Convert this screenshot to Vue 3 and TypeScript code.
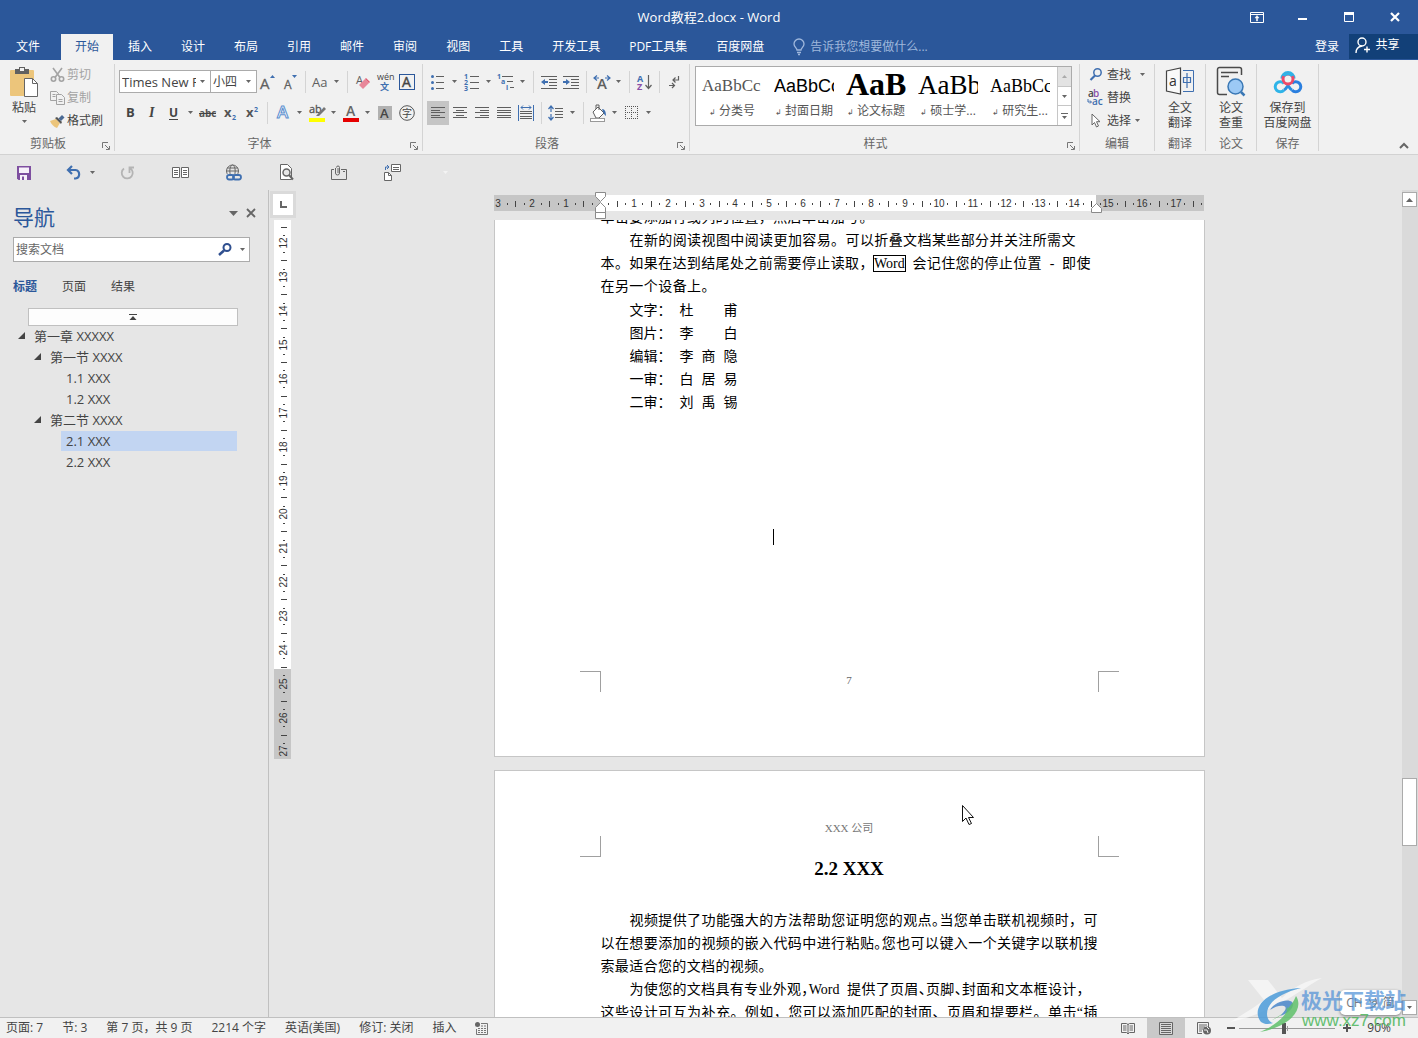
<script setup lang="ts">
import { h } from 'vue'

interface IconDef { w: number; h: number; d: string }
interface Tool { icon?: string; label?: string; caret?: boolean; sep?: number; on?: boolean }

const G = '#5f5f5f'
const B = '#3f6fb0'

function bars(list: number[][], color = G): string {
  return list.map(([x, y, w]) => `<rect x="${x}" y="${y}" width="${w}" height="1" fill="${color}"/>`).join('')
}

const sans = 'font-family="Open Sans, sans-serif"'
const serif = 'font-family="Liberation Serif, serif"'

const icons: Record<string, IconDef> = {
  caret: { w: 5, h: 3, d: `<path d="M0 0h5L2.500 3z" fill="#666"/>` },
  caretBig: { w: 9, h: 5, d: `<path d="M0 0h9L4.500 5z" fill="#666"/>` },
  bulb: { w: 12, h: 16, d: `<path d="M4 11c0-2-3-3-3-6a5 5 0 0 1 10 0c0 3-3 4-3 6zM4 13.500h4M5 15.500h2" fill="none" stroke="#9fb7dc" stroke-width="1.300"/>` },
  user: { w: 16, h: 16, d: `<g fill="none" stroke="#fff" stroke-width="1.400"><circle cx="7" cy="5" r="4"/><path d="M1 16c0-4 2.500-6.500 6-7M12 9.500v6M9 12.500h6"/></g>` },
  winRibbon: { w: 14, h: 11, d: `<path d="M.5.5h13v10H.5zM.5 2.500h13" fill="none" stroke="#fff"/><path d="M6.500 9V6H5l2-2.500L9 6H7.500v3z" fill="#fff" stroke="#fff" stroke-width=".5"/>` },
  winMin: { w: 10, h: 10, d: `<rect y="6" width="9" height="2" fill="#fff"/>` },
  winMax: { w: 10, h: 10, d: `<path d="M.5 1.500h9v8h-9z" fill="none" stroke="#fff"/><rect width="10" height="3" fill="#fff"/>` },
  winClose: { w: 10, h: 10, d: `<path d="M1 1l8 8M9 1L1 9" stroke="#fff" stroke-width="2.200"/>` },
  paste: { w: 30, h: 32, d: `<rect x="1" y="4" width="24" height="26" rx="1" fill="#ecc57b"/><path d="M6 3h4V1h6v2h4v5H6z" fill="#606060"/><rect x="11" y="2" width="4" height="3" fill="#f1f1f1"/><path d="M15.500 12.500h8l5 5v13h-13z" fill="#fff" stroke="#666"/><path d="M23.500 12.500v5h5" fill="none" stroke="#666"/>` },
  cut: { w: 15, h: 15, d: `<g fill="none" stroke="#a3a3a3" stroke-width="1.600"><path d="M3 1l7 9.500M12 1L5 10.500"/><circle cx="3.500" cy="12" r="2.200"/><circle cx="11.500" cy="12" r="2.200"/></g>` },
  copy: { w: 15, h: 14, d: `<g fill="#f1f1f1" stroke="#a3a3a3"><path d="M.5.5h6l2 2v7h-8z"/><path d="M6.500 3.500h5l3 3v7h-8z"/></g><path d="M2.500 3.500h3M2.500 5.500h3M8.500 8.500h4M8.500 10.500h4" stroke="#a3a3a3"/>` },
  brush: { w: 17, h: 14, d: `<path d="M1 7l6-2 4 4-3 5C5 13 2 10 1 7z" fill="#ecc57b"/><path d="M6 4l2-1 5 5-1 2z" fill="#555"/><path d="M9.500 4.500L13 1l2.500 2.500-3.500 3.500z" fill="#4a6a94"/>` },
  launcher: { w: 8, h: 8, d: `<path d="M.5 6V.5H6M3 3l4 4M7.500 4v3.500H4" fill="none" stroke="#777"/>` },
  grow: { w: 18, h: 18, d: `<text x="1" y="16" ${sans} font-size="15" fill="${G}" stroke="${G}" stroke-width=".3">A</text><path d="M11 5h5l-2.500-3z" fill="${B}"/>` },
  shrink: { w: 18, h: 18, d: `<text x="3" y="16" ${sans} font-size="12" fill="${G}" stroke="${G}" stroke-width=".3">A</text><path d="M11 2h5l-2.500 3z" fill="${B}"/>` },
  aa: { w: 18, h: 18, d: `<text x="1" y="14" ${sans} font-size="13" fill="${G}">Aa</text>` },
  eraser: { w: 18, h: 18, d: `<text x="2" y="11" ${sans} font-size="11" fill="${G}">A</text><path d="M5 12l6-6 4 4-6 6z" fill="#e8889a"/><path d="M11 6l1-1 4 4-1 1z" fill="#e05a72"/>` },
  wen: { w: 20, h: 20, d: `<text x="2" y="8" ${sans} font-size="9" fill="#444">wén</text><text x="5" y="18" font-family="Noto Sans CJK SC, sans-serif" font-size="9" font-weight="700" fill="${B}">文</text>` },
  boxA: { w: 16, h: 18, d: `<rect x=".5" y="1.500" width="15" height="15" fill="none" stroke="#2b579a"/><text x="3" y="14" ${sans} font-size="14" fill="#444" stroke="#444" stroke-width=".4">A</text>` },
  bold: { w: 12, h: 16, d: `<text x="2" y="12" ${sans} font-size="13" font-weight="700" fill="#444">B</text>` },
  italic: { w: 12, h: 16, d: `<text x="3" y="12" ${serif} font-size="14" font-style="italic" font-weight="700" fill="#444">I</text>` },
  under: { w: 12, h: 16, d: `<text x="1" y="12" ${sans} font-size="12" font-weight="700" fill="#444">U</text><rect x="1" y="14" width="9" height="1" fill="#444"/>` },
  strike: { w: 18, h: 16, d: `<text x="0" y="12" ${sans} font-size="10" font-weight="700" fill="#555">abc</text><rect x="0" y="8" width="17" height="1" fill="#444"/>` },
  sub: { w: 16, h: 16, d: `<text x="2" y="12" ${sans} font-size="13" font-weight="700" fill="#555">x</text><text x="10" y="15" ${sans} font-size="7" font-weight="700" fill="${B}">2</text>` },
  sup: { w: 16, h: 16, d: `<text x="2" y="12" ${sans} font-size="13" font-weight="700" fill="#555">x</text><text x="10" y="7" ${sans} font-size="7" font-weight="700" fill="${B}">2</text>` },
  effect: { w: 16, h: 18, d: `<text x="2" y="14" ${sans} font-size="17" font-weight="600" fill="#fff" stroke="#5b8fcf" stroke-width="1">A</text>` },
  marker: { w: 20, h: 20, d: `<text x="2" y="10" ${sans} font-size="11" fill="#555" stroke="#555" stroke-width=".3">ab</text><path d="M9 13l8-9 2 2-7 7z" fill="#777"/><rect x="2" y="15" width="16" height="4" fill="#ff0"/>` },
  fontColor: { w: 18, h: 20, d: `<text x="4" y="13" ${sans} font-size="14" font-weight="600" fill="#666">A</text><rect x="1" y="15" width="16" height="4" fill="#e60000"/>` },
  shadeA: { w: 14, h: 16, d: `<rect y="1" width="14" height="14" fill="#b1b1b1"/><text x="2" y="13" ${sans} font-size="13" font-weight="600" fill="#444">A</text>` },
  circleChar: { w: 16, h: 16, d: `<circle cx="8" cy="8" r="7.300" fill="none" stroke="#555"/><text x="3" y="12" font-family="Noto Sans CJK SC, sans-serif" font-size="10" fill="#444">字</text>` },
  bullets: { w: 16, h: 16, d: `<g fill="${B}"><circle cx="2.500" cy="2.500" r="1.500"/><circle cx="2.500" cy="8.500" r="1.500"/><circle cx="2.500" cy="14.500" r="1.500"/></g>${bars([[6, 2, 8], [6, 8, 8], [6, 14, 8]])}` },
  numbers: { w: 16, h: 18, d: `<g ${sans} font-size="7" font-weight="700" fill="${B}"><text y="6">1</text><text y="12">2</text><text y="18">3</text></g>${bars([[6, 3, 9], [6, 9, 9], [6, 15, 9]])}` },
  multi: { w: 18, h: 18, d: `<g ${sans} font-size="7" font-weight="700" fill="${B}"><text y="6">1</text><text x="4" y="11">a</text><text x="9" y="17">i</text></g>${bars([[5, 3, 11], [10, 8, 6], [13, 14, 4]])}` },
  outdent: { w: 16, h: 14, d: `${bars([[0, 1, 16], [8, 4, 8], [8, 7, 8], [8, 10, 8], [0, 13, 16]])}<path d="M0 7l4-3v2h3v2H4v2z" fill="${B}"/>` },
  indent: { w: 16, h: 14, d: `${bars([[0, 1, 16], [8, 4, 8], [8, 7, 8], [8, 10, 8], [0, 13, 16]])}<path d="M7 7L3 4v2H0v2h3v2z" fill="${B}"/>` },
  wideA: { w: 18, h: 16, d: `<text x="4" y="15" ${sans} font-size="15" font-weight="600" fill="${G}">A</text><path d="M1 4h5M4 1.500L1 4l3 2.500M12 4h5M14 1.500L17 4l-3 2.500" fill="none" stroke="${B}" stroke-width="1.200"/>` },
  sort: { w: 16, h: 18, d: `<text x="1" y="9" ${sans} font-size="9" font-weight="700" fill="${B}">A</text><text x="1" y="17" ${sans} font-size="9" font-weight="700" fill="#8a4fa8">Z</text><path d="M12.500 2v13M9.500 12l3 3.500 3-3.500" fill="none" stroke="${G}" stroke-width="1.200"/>` },
  marks: { w: 12, h: 14, d: `<g fill="none" stroke="${G}" stroke-width="1.200"><path d="M10.500 1v4H5M7.500 2.500L5 5l2.500 2.500M1 10.500h5M4 8l2.500 2.500L4 13"/></g>` },
  left: { w: 14, h: 12, d: bars([[0, 0, 14], [0, 3, 9], [0, 5, 14], [0, 8, 9], [0, 10, 14]]) },
  center: { w: 14, h: 12, d: bars([[0, 0, 14], [3, 3, 8], [0, 5, 14], [3, 8, 8], [0, 10, 14]]) },
  right: { w: 14, h: 12, d: bars([[0, 0, 14], [5, 3, 9], [0, 5, 14], [5, 8, 9], [0, 10, 14]]) },
  justify: { w: 14, h: 12, d: bars([[0, 0, 14], [0, 3, 14], [0, 5, 14], [0, 8, 14], [0, 10, 14]]) },
  distribute: { w: 16, h: 16, d: `<path d="M.5 0v16M15.500 0v16M3 2.500h10M5 .5l-2 2 2 2M11 .5l2 2-2 2" fill="none" stroke="${B}"/>${bars([[2, 6, 12], [2, 8, 12], [2, 11, 12], [2, 13, 12]])}` },
  spacing: { w: 16, h: 16, d: `<path d="M3 1v14M.5 4L3 1l2.500 3M.5 12L3 15l2.500-3" fill="none" stroke="${B}" stroke-width="1.200"/><path d="M1 8h4" stroke="#f1f1f1" stroke-width="2"/>${bars([[7, 3, 8], [7, 6, 8], [7, 9, 8], [7, 12, 8]])}` },
  fill: { w: 18, h: 18, d: `<path d="M4 8l5-5 6 6-5 5H7z" fill="#fff" stroke="${G}"/><path d="M7 5V1h3v5" fill="none" stroke="${G}"/><path d="M13 5c3 0 4 3 4 7-2-1-2-3-3-4z" fill="${B}"/><rect x="1.500" y="14.500" width="14" height="3" fill="#fff" stroke="#999"/>` },
  borders: { w: 14, h: 14, d: `<path d="M0 .5h13M0 6.500h13M0 12.500h13M.5 0v13M6.500 0v13M12.500 0v13" fill="none" stroke="#555" stroke-dasharray="1 1"/>` },
  find: { w: 14, h: 13, d: `<circle cx="8.500" cy="4.500" r="3.700" fill="none" stroke="${B}" stroke-width="1.500"/><path d="M6 7.500L1.500 12" stroke="${B}" stroke-width="2.200"/>` },
  findBold: { w: 14, h: 13, d: `<circle cx="9" cy="4.500" r="3.500" fill="none" stroke="#2f4f8f" stroke-width="2"/><path d="M6 7.500L1 12" stroke="#2f4f8f" stroke-width="2.500"/>` },
  replace: { w: 17, h: 18, d: `<g ${sans} font-size="10" font-weight="600"><text x="1" y="8" fill="#444">a</text><text x="6" y="8" fill="#8a4fa8">b</text><text x="5" y="16" fill="${B}">ac</text></g><path d="M1 10v3h3M3 11.500L4.500 13 3 14.500" fill="none" stroke="${B}"/>` },
  select: { w: 10, h: 15, d: `<path d="M1 1v11l2.500-2.500 2 4.500 2-1-2-4.300H9z" fill="#fff" stroke="#666"/>` },
  translate: { w: 30, h: 30, d: `<path d="M1.500 5L15.500 2v26l-14-3z" fill="#fafafa" stroke="#444" stroke-width="1.200"/><text x="4" y="20" ${sans} font-size="14" fill="#333">a</text><path d="M18 4.500h10.500v21H18" fill="none" stroke="${B}"/><path d="M18.500 11.500h7v5h-7zM22 7v15" fill="none" stroke="${B}" stroke-width="1.200"/>` },
  paper: { w: 30, h: 30, d: `<path d="M11 28.500H3.500a2 2 0 0 1-2-2v-23a2 2 0 0 1 2-2h20a2 2 0 0 1 2 2V9" fill="none" stroke="#4a4a4a" stroke-width="1.500"/><path d="M5 6.500h17M5 10.500h8" stroke="#4a4a4a" stroke-width="1.500"/><circle cx="19.500" cy="20.500" r="7.500" fill="#9cc9f5" stroke="#3a78b5" stroke-width="1.500"/><path d="M25 26l3.500 3.500" stroke="#3a78b5" stroke-width="2.500"/>` },
  netdisk: { w: 28, h: 24, d: `<g fill="none" stroke-width="3"><path d="M10 14.500a5 5 0 1 0 0 6.500" stroke="#2eb4e8"/><path d="M18 14.500a5 5 0 1 1 0 6.500" stroke="#2a7fdf"/><path d="M10 21c2-1 3-3 4-4.500 1 1.500 2 3.500 4 4.500" stroke="#2a8ddf"/><path d="M8 9.500a6 6 0 0 1 12 0" stroke="#2eb4e8"/><circle cx="14" cy="10" r="5" stroke="#ee4a68"/><path d="M9.500 7a5.500 5.500 0 0 1 9 0" stroke="#2eb4e8"/></g>` },
  collapse: { w: 10, h: 7, d: `<path d="M1 6l4-4 4 4" fill="none" stroke="#666" stroke-width="2"/>` },
  save: { w: 14, h: 14, d: `<path d="M0 0h14v14H1.500L0 12.500z" fill="#7e4fa0"/><rect x="2" y="1.500" width="10" height="5.500" fill="#f7f1fa"/><rect x="3" y="9" width="7" height="5" fill="#f7f1fa"/><rect x="5" y="10.500" width="2" height="3.500" fill="#7e4fa0"/>` },
  undo: { w: 16, h: 15, d: `<path d="M2 5h7.500a4.300 4.300 0 0 1 0 8.500H8M6 1L2 5l4 4" fill="none" stroke="${B}" stroke-width="2.200"/>` },
  redo: { w: 15, h: 14, d: `<path d="M10 2.200A5.500 5.500 0 1 1 4 2.500M9.500 7V1.500H14" fill="none" stroke="#b4b4b4" stroke-width="1.800"/>` },
  pages: { w: 17, h: 12, d: `<path d="M.5.5h7v10h-7zM9.500.5h7v10h-7z" fill="#fff" stroke="#666"/><path d="M2 3.500h4M2 5.500h4M2 7.500h4M11 3.500h4M11 5.500h4M11 7.500h4" stroke="#666"/>` },
  globe: { w: 17, h: 17, d: `<g fill="none" stroke="#666"><circle cx="7.500" cy="7" r="6"/><ellipse cx="7.500" cy="7" rx="2.700" ry="6"/><path d="M2 4h11M1.500 7h12"/></g><rect x="1" y="10" width="16" height="7" fill="#e6e6e6"/><g fill="none" stroke="${B}" stroke-width="1.800"><rect x="2" y="11" width="7" height="4.500" rx="2.200"/><rect x="8" y="11" width="8" height="4.500" rx="2.200"/></g>` },
  preview: { w: 15, h: 17, d: `<path d="M1.500.5h7l4 4v11h-11z" fill="#fff" stroke="#666"/><circle cx="7.500" cy="8.500" r="3.500" fill="#e6e6e6" stroke="#666" stroke-width="1.500"/><path d="M10 11l4 4.500" stroke="#666" stroke-width="2"/>` },
  clip: { w: 17, h: 16, d: `<path d="M3 4.500H.5v10h15v-10H10M12 6.500h2" fill="none" stroke="#666"/><path d="M4.500 3v5a2 2 0 0 0 4 0V2.500a1.500 1.500 0 0 0-3 0" fill="none" stroke="#666"/><path d="M7 3v5" stroke="#666"/>` },
  swap: { w: 17, h: 17, d: `<path d="M7.500.5h9v7h-9zM9 3.500h6M9 5.500h6M.5 8.500h4l3 3v5h-7z" fill="#fff" stroke="#666"/><path d="M4.500 8.500v3h3" fill="none" stroke="#666"/><path d="M1.500 6V3h3M3 1l2 2-2 2" fill="none" stroke="${B}"/>` },
  dash: { w: 5, h: 5, d: `<path d="M0 1h5L2.500 4z" fill="#f4f4f4"/>` },
  close: { w: 10, h: 10, d: `<path d="M1 1l8 8M9 1L1 9" stroke="#666" stroke-width="1.800"/>` },
  toTop: { w: 8, h: 6, d: `<path d="M0 0h8v1H0zM4 2l3.500 4h-7z" fill="#444"/>` },
  node: { w: 7, h: 7, d: `<path d="M7 0v7H0z" fill="#444"/>` },
  up: { w: 7, h: 4, d: `<path d="M3.500 0L7 4H0z" fill="#666"/>` },
  upPale: { w: 5, h: 3, d: `<path d="M2.500 0L5 3H0z" fill="#aaa"/>` },
  more: { w: 7, h: 6, d: `<path d="M0 0h7v1H0zM1 3h5L3.500 6z" fill="#666"/>` },
  tabL: { w: 8, h: 8, d: `<path d="M1 0h2v5h5v2H1z" fill="#666"/>` },
  macro: { w: 13, h: 13, d: `<circle cx="2.500" cy="2.500" r="2.500" fill="#666"/><path d="M6 1.500h6.500v11h-11V7" fill="none" stroke="#777"/><path d="M6 4h6M3 6.500h8M3 8.500h8M3 10.500h8" stroke="#777" stroke-dasharray="2 1"/>` },
  read: { w: 14, h: 13, d: `<path d="M.5 1.500h5l1.500 1 1.500-1h5v9h-5L7 12l-1.500-1.500h-5zM7 2v10" fill="none" stroke="#666"/><path d="M2 4h3.500M2 6h3.500M2 8h3.500M8.500 4H12M8.500 6H12M8.500 8H12" stroke="#666"/>` },
  print: { w: 14, h: 13, d: `<path d="M.5.5h13v12H.5z" fill="#d9d9d9" stroke="#666"/><path d="M2 2.500h10M2 4.500h10M2 6.500h10M2 8.500h10M2 10.500h10" stroke="#666"/>` },
  web: { w: 15, h: 13, d: `<path d="M5 11.500H.5V.5h11V5M2 3h8M2 5h6M2 7h4M2 9h3" fill="none" stroke="#666"/><circle cx="10" cy="8.500" r="4" fill="#666"/><path d="M7 8h3l1 3M10 5l2 2" stroke="#eee" fill="none"/>` },
  imeMark: { w: 12, h: 12, d: `<path d="M2 2c1 1 2 2 1 4M8 1c2 2 3 8-5 10M5 6c2-3 5-2 5 1" fill="none" stroke="#888" stroke-width="1.200"/>` },
}

const Icon = (p: { name: string }) => {
  const i = icons[p.name]
  return h('svg', { class: 'icon', width: i.w, height: i.h, viewBox: `0 0 ${i.w} ${i.h}`, 'aria-hidden': 'true', innerHTML: i.d })
}
Icon.props = ['name']

const tabs = ['开始', '插入', '设计', '布局', '引用', '邮件', '审阅', '视图', '工具', '开发工具', 'PDF工具集', '百度网盘']

const fontTop: Tool[] = [
  { icon: 'grow', label: '增大字号' }, { icon: 'shrink', label: '减小字号' }, { sep: 8 },
  { icon: 'aa', label: '更改大小写', caret: true }, { sep: 9 },
  { icon: 'eraser', label: '清除所有格式' }, { icon: 'wen', label: '拼音指南' }, { icon: 'boxA', label: '字符边框' },
]
const fontBottom: Tool[] = [
  { icon: 'bold', label: '加粗' }, { icon: 'italic', label: '倾斜' }, { icon: 'under', label: '下划线', caret: true },
  { icon: 'strike', label: '删除线' }, { icon: 'sub', label: '下标' }, { icon: 'sup', label: '上标' }, { sep: 9 },
  { icon: 'effect', label: '文本效果', caret: true }, { icon: 'marker', label: '突出显示', caret: true },
  { icon: 'fontColor', label: '字体颜色', caret: true }, { icon: 'shadeA', label: '字符底纹' }, { icon: 'circleChar', label: '带圈字符' },
]
const paraTop: Tool[] = [
  { icon: 'bullets', label: '项目符号', caret: true }, { icon: 'numbers', label: '编号', caret: true },
  { icon: 'multi', label: '多级列表', caret: true }, { sep: 9 },
  { icon: 'outdent', label: '减少缩进量' }, { icon: 'indent', label: '增加缩进量' }, { sep: 9 },
  { icon: 'wideA', label: '中文版式', caret: true }, { sep: 8 }, { icon: 'sort', label: '排序' }, { sep: 8 },
  { icon: 'marks', label: '显示编辑标记' },
]
const paraBottom: Tool[] = [
  { icon: 'left', label: '左对齐', on: true }, { icon: 'center', label: '居中' }, { icon: 'right', label: '右对齐' },
  { icon: 'justify', label: '两端对齐' }, { icon: 'distribute', label: '分散对齐' }, { sep: 8 },
  { icon: 'spacing', label: '行距', caret: true }, { sep: 8 },
  { icon: 'fill', label: '底纹', caret: true }, { icon: 'borders', label: '边框', caret: true },
]

const styles = [
  { cls: 'pv-light', name: '分类号' }, { cls: 'pv-hei', name: '封面日期' }, { cls: 'pv-title', name: '论文标题' },
  { cls: 'pv-big', name: '硕士学...' }, { cls: 'pv-body', name: '研究生...' },
]

const quick = [
  { icon: 'redo', label: '重复' }, { icon: 'pages', label: '多页' }, { icon: 'globe', label: '超链接' },
  { icon: 'preview', label: '打印预览' }, { icon: 'clip', label: '附件' }, { icon: 'swap', label: '切换' },
  { icon: 'dash', label: '自定义快速访问工具栏' },
]

const tree = [
  { level: 1, text: '第一章 XXXXX', open: true }, { level: 2, text: '第一节 XXXX', open: true },
  { level: 3, text: '1.1 XXX' }, { level: 3, text: '1.2 XXX' }, { level: 2, text: '第二节 XXXX', open: true },
  { level: 3, text: '2.1 XXX', active: true }, { level: 3, text: '2.2 XXX' },
]

const credits = [['文字：', '杜甫'], ['图片：', '李白'], ['编辑：', '李商隐'], ['一审：', '白居易'], ['二审：', '刘禹锡']]
const stats = ['页面: 7', '节: 3', '第 7 页，共 9 页', '2214 个字', '英语(美国)', '修订: 关闭', '插入']

const CM = 33.87
function marks(from: number, to: number, origin: number, limit: number) {
  const out: { at: number; kind: 'num' | 'dot' | 'tick'; n: number }[] = []
  for (let q = from * 4; q <= to * 4; q++) {
    const at = Math.round(origin + (q * CM) / 4)
    if (at < 3 || at > limit - 2 || q === 0) continue
    out.push({ at, kind: q % 4 === 0 ? 'num' : q % 2 === 0 ? 'tick' : 'dot', n: Math.abs(q / 4) })
  }
  return out
}
const hMarks = marks(-3, 18, 106, 712)
const vMarks = marks(11, 27, -383, 539)
</script>

<template>
  <div class="app">
    <header class="title-bar">
      <span></span>
      <h1>Word教程2.docx - Word</h1>
      <div class="win">
        <button aria-label="功能区显示选项"><Icon name="winRibbon" /></button>
        <button aria-label="最小化"><Icon name="winMin" /></button>
        <button aria-label="最大化"><Icon name="winMax" /></button>
        <button aria-label="关闭"><Icon name="winClose" /></button>
      </div>
    </header>

    <nav class="tabs">
      <button class="tab file">文件</button>
      <button v-for="(t, i) in tabs" :key="t" class="tab" :class="{ active: i === 0 }">{{ t }}</button>
      <button class="tell"><Icon name="bulb" />告诉我您想要做什么...</button>
      <button class="login">登录</button>
      <button class="share"><Icon name="user" />共享</button>
    </nav>

    <section class="ribbon">
      <div class="group g-clip">
        <div class="body clip">
          <button class="big paste"><Icon name="paste" /><span>粘贴</span><Icon name="caret" /></button>
          <div class="stack">
            <button class="small off"><span class="ic"><Icon name="cut" /></span>剪切</button>
            <button class="small off"><span class="ic"><Icon name="copy" /></span>复制</button>
            <button class="small"><span class="ic"><Icon name="brush" /></span>格式刷</button>
          </div>
        </div>
        <footer><span>剪贴板</span><button aria-label="剪贴板选项"><Icon name="launcher" /></button></footer>
      </div>

      <div class="group g-font">
        <div class="body rows">
          <div class="row">
            <label class="combo name"><select aria-label="字体"><option>Times New Roman</option></select><Icon name="caret" /></label>
            <label class="combo size"><select aria-label="字号"><option>小四</option></select><Icon name="caret" /></label>
            <template v-for="(t, i) in fontTop" :key="i">
              <span v-if="t.sep" class="sep" :style="{ width: t.sep + 'px' }"></span>
              <button v-else class="tool" :class="{ drop: t.caret }" :aria-label="t.label"><span><Icon :name="t.icon!" /></span><Icon v-if="t.caret" name="caret" /></button>
            </template>
          </div>
          <div class="row">
            <template v-for="(t, i) in fontBottom" :key="i">
              <span v-if="t.sep" class="sep" :style="{ width: t.sep + 'px' }"></span>
              <button v-else class="tool" :class="{ drop: t.caret }" :aria-label="t.label"><span><Icon :name="t.icon!" /></span><Icon v-if="t.caret" name="caret" /></button>
            </template>
          </div>
        </div>
        <footer><span>字体</span><button aria-label="字体选项"><Icon name="launcher" /></button></footer>
      </div>

      <div class="group g-para">
        <div class="body rows">
          <div v-for="(r, k) in [paraTop, paraBottom]" :key="k" class="row">
            <template v-for="(t, i) in r" :key="i">
              <span v-if="t.sep" class="sep" :style="{ width: t.sep + 'px' }"></span>
              <button v-else class="tool" :class="{ drop: t.caret, on: t.on }" :aria-label="t.label"><span><Icon :name="t.icon!" /></span><Icon v-if="t.caret" name="caret" /></button>
            </template>
          </div>
        </div>
        <footer><span>段落</span><button aria-label="段落选项"><Icon name="launcher" /></button></footer>
      </div>

      <div class="group g-styles">
        <div class="body">
          <div class="gallery">
            <button v-for="s in styles" :key="s.name" class="style">
              <span class="pv" :class="s.cls">AaBbCc</span>
              <span class="nm"><small>↲</small> {{ s.name }}</span>
            </button>
            <div class="gal-nav">
              <button class="dim" aria-label="上一行"><Icon name="upPale" /></button>
              <button aria-label="下一行"><Icon name="caret" /></button>
              <button aria-label="其他"><Icon name="more" /></button>
            </div>
          </div>
        </div>
        <footer><span>样式</span><button aria-label="样式选项"><Icon name="launcher" /></button></footer>
      </div>

      <div class="group g-edit">
        <div class="body">
          <div class="stack">
            <button class="small"><span class="ic"><Icon name="find" /></span>查找<Icon class="far" name="caret" /></button>
            <button class="small"><span class="ic"><Icon name="replace" /></span>替换</button>
            <button class="small"><span class="ic"><Icon name="select" /></span>选择<Icon class="near" name="caret" /></button>
          </div>
        </div>
        <footer><span>编辑</span></footer>
      </div>
      <div class="group g-one">
        <div class="body"><button class="big"><Icon name="translate" /><span>全文<br />翻译</span></button></div>
        <footer><span>翻译</span></footer>
      </div>
      <div class="group g-one">
        <div class="body"><button class="big"><Icon name="paper" /><span>论文<br />查重</span></button></div>
        <footer><span>论文</span></footer>
      </div>
      <div class="group g-save">
        <div class="body"><button class="big"><Icon name="netdisk" /><span>保存到<br />百度网盘</span></button></div>
        <footer><span>保存</span></footer>
      </div>
      <button class="collapse" aria-label="折叠功能区"><Icon name="collapse" /></button>
    </section>

    <div class="quick">
      <button class="q-save" aria-label="保存"><Icon name="save" /></button>
      <button class="q-undo" aria-label="撤消"><Icon name="undo" /><Icon name="caret" /></button>
      <button v-for="q in quick" :key="q.icon" :aria-label="q.label"><Icon :name="q.icon" /></button>
    </div>

    <main class="work">
      <aside class="nav">
        <div class="nav-head">
          <h2>导航</h2>
          <button aria-label="任务窗格选项"><Icon name="caretBig" /></button>
          <button aria-label="关闭"><Icon name="close" /></button>
        </div>
        <div class="search">
          <input type="text" placeholder="搜索文档" aria-label="搜索文档" />
          <button aria-label="搜索"><Icon name="findBold" /></button>
          <button class="s-more" aria-label="搜索选项"><Icon name="caret" /></button>
        </div>
        <div class="nav-tabs">
          <button class="active">标题</button><button>页面</button><button>结果</button>
        </div>
        <button class="to-top" aria-label="跳转到开头"><Icon name="toTop" /></button>
        <ul class="tree">
          <li v-for="n in tree" :key="n.text" :class="['lv' + n.level, { active: n.active }]">
            <span class="arrow"><Icon v-if="n.open" name="node" /></span><a href="#">{{ n.text }}</a>
          </li>
        </ul>
      </aside>

      <div class="v-col">
        <button class="tab-stop" aria-label="制表符"><Icon name="tabL" /></button>
        <svg class="v-ruler" width="17" height="539" viewBox="0 0 17 539">
          <rect width="17" height="449" fill="#fff" /><rect y="449" width="17" height="90" fill="#c6c6c6" />
          <template v-for="m in vMarks" :key="m.at">
            <text v-if="m.kind === 'num'" :transform="`translate(13 ${m.at}) rotate(-90)`" text-anchor="middle">{{ m.n }}</text>
            <rect v-else-if="m.kind === 'tick'" class="mk" x="7" :y="m.at" width="6" height="1" />
            <rect v-else class="mk" x="9" :y="m.at" width="2" height="1" />
          </template>
        </svg>
      </div>

      <div class="canvas">
        <svg class="h-ruler" width="711" height="26" viewBox="0 0 711 26">
          <rect y="5" width="710" height="16" fill="#c6c6c6" /><rect x="106" y="5" width="496" height="16" fill="#fff" />
          <template v-for="m in hMarks" :key="m.at">
            <text v-if="m.kind === 'num'" :x="m.at" y="17" text-anchor="middle">{{ m.n }}</text>
            <rect v-else-if="m.kind === 'tick'" class="mk" :x="m.at" y="11" width="1" height="6" />
            <rect v-else class="mk" :x="m.at" y="13" width="1" height="2" />
          </template>
          <g class="handle">
            <path d="M101.500 2.500h10v4l-5 5-5-5zM106.500 12.500l5 5v5h-10v-5zM101.500 22.500h10v6h-10z" />
            <path d="M602.500 13.500l5 5v4h-10v-4z" />
          </g>
        </svg>

        <div class="viewport">
          <article class="page first">
            <div class="text">
              <p><span class="line l19">单击要添加行或列的位置，然后单击加号。</span></p>
              <p>
                <span class="line in l33">在新的阅读视图中阅读更加容易。可以折叠文档某些部分并关注所需文</span>
                <span class="line l34">本。如果在达到结尾处之前需要停止读取，<b class="boxed">Word</b>&nbsp; 会记住您的停止位置&nbsp; -&nbsp; 即使</span>
                <span class="line l8">在另一个设备上。</span>
              </p>
              <dl>
                <div v-for="c in credits" :key="c[0]"><dt>{{ c[0] }}</dt><dd>{{ c[1] }}</dd></div>
              </dl>
            </div>
            <div class="edge foot"><i></i><span>7</span><i></i></div>
            <span class="beam"></span>
          </article>

          <article class="page second">
            <p class="running">XXX 公司</p>
            <div class="edge head"><i></i><i></i></div>
            <h3>2.2 XXX</h3>
            <div class="text">
              <p>
                <span class="line in">视频提供了功能强大的方法帮助您证明您的观点<i class="half">。</i>当您单击联机视频时，可</span>
                <span class="line">以在想要添加的视频的嵌入代码中进行粘贴<i class="half">。</i>您也可以键入一个关键字以联机搜</span>
                <span class="line l12">索最适合您的文档的视频。</span>
              </p>
              <p>
                <span class="line in l34">为使您的文档具有专业外观<i class="half">，</i>Word&nbsp; 提供了页眉<i class="half">、</i>页脚<i class="half">、</i>封面和文本框设计，</span>
                <span class="line">这些设计可互为补充。例如，您可以添加匹配的封面、页眉和提要栏。单击“插</span>
              </p>
            </div>
            <svg class="pointer" width="12" height="20" viewBox="0 0 12 20"><path d="M.5.5v16l3.500-3.500 3 6.500 2.500-1-3-6h5z" fill="#fff" stroke="#111" /></svg>
          </article>
        </div>
      </div>

      <div class="scroll">
        <button aria-label="向上滚动"><Icon name="up" /></button>
        <div class="track"><div class="thumb"></div></div>
        <button aria-label="向下滚动"><Icon name="caret" /></button>
      </div>
    </main>

    <footer class="status">
      <span v-for="s in stats" :key="s">{{ s }}</span>
      <Icon name="macro" />
      <div class="views">
        <button aria-label="阅读视图"><Icon name="read" /></button>
        <button class="on" aria-label="页面视图"><Icon name="print" /></button>
        <button aria-label="Web 版式视图"><Icon name="web" /></button>
      </div>
      <div class="zoom-box">
        <button class="minus" aria-label="缩小"></button>
        <input class="zoom" type="range" min="10" max="184" value="90" aria-label="显示比例" />
        <button class="plus" aria-label="放大"></button>
      </div>
      <span class="pct">90%</span>
    </footer>

    <div class="brand">
      <svg width="190" height="60" viewBox="0 0 190 60">
        <path d="M20 4h20l14 18c10-10 24-18 40-20C72 14 44 38 2 46c14-8 26-16 34-22z" fill="#fff" opacity=".55" />
        <path d="M33 46c-10-12 2-32 40-34-20 5-34 14-34 26 0 4 2 8 6 9-5 2-9 1-12-1z" fill="#4a9ad8" opacity=".85" />
        <path d="M42 34c4-8 18-12 22-8 4 4-4 12-12 14 4-4 8-8 4-10-3-1-9 0-14 4z" fill="#3f7fc8" opacity=".8" />
        <path d="M68 20c8 12-4 30-36 36 18-8 28-18 28-26-3 7-10 12-16 14 12-6 20-14 24-24z" fill="#5fbf6a" opacity=".85" />
      </svg>
      <div class="ime">CH <Icon name="imeMark" /> 简</div>
      <strong>极光下载站</strong>
      <em>www.xz7.com</em>
    </div>
  </div>
</template>

<style>
body { margin: 0; overflow: hidden; }
</style>

<style scoped>
.app { position: relative; display: flex; flex-direction: column; height: 100vh; overflow: hidden; background: #e6e6e6; color: #444; font: 12px/16px "Open Sans", "Noto Sans CJK SC", sans-serif; }
.app * { box-sizing: border-box; }
button { border: 0; background: none; padding: 0; margin: 0; font: inherit; color: inherit; display: flex; align-items: center; justify-content: center; white-space: nowrap; }
h1, h2, h3, p, ul, dl, dd { margin: 0; padding: 0; font-weight: 400; }
.icon { flex: none; display: block; overflow: visible; }

.title-bar { display: grid; grid-template-columns: 1fr auto 1fr; align-items: center; height: 34px; flex: none; background: #2b579a; color: #fff; }
.title-bar h1 { font-size: 13px; line-height: 34px; }
.win { display: flex; justify-content: flex-end; }
.win button { width: 46px; height: 34px; }

.tabs { display: flex; align-items: stretch; gap: 1px; height: 26px; flex: none; background: #2b579a; color: #fff; }
.tab { padding: 0 14px; line-height: 22px; }
.tab.file { padding: 0 16px; margin-right: 4px; }
.tab.active { background: #f1f1f1; color: #2b579a; }
.tell { margin-left: 14px; gap: 5px; color: #9fb7dc; }
.login { margin-left: auto; padding: 0 9px; }
.share { width: 69px; height: 25px; gap: 4px; padding: 0 12px 3px 0; background: #124078; }

.ribbon { display: flex; flex: none; height: 95px; background: #f1f1f1; border-bottom: 1px solid #d2d2d2; }
.group { display: flex; flex-direction: column; flex: none; border-right: 1px solid #d4d4d4; margin: 4px 0; height: 87px; }
.body { height: 70px; }
.group footer { display: flex; height: 17px; color: #666; }
.group footer span { flex: 1; text-align: center; line-height: 20px; }
.group footer button { width: 16px; margin-left: -16px; align-items: flex-end; padding-bottom: 1px; }
.g-clip { width: 115px; }
.g-font { width: 308px; }
.g-para { width: 267px; }
.g-styles { width: 390px; }
.g-clip footer span, .g-font footer span, .g-para footer span, .g-styles footer span { padding-right: 18px; }
.g-edit { width: 75px; }
.g-one { width: 51px; }
.g-save { width: 62px; }
.clip { display: flex; }
.big { width: 100%; height: 68px; flex-direction: column; justify-content: flex-start; color: #444; }
.big .icon { margin: 2px 0; }
.big span { line-height: 15px; text-align: center; margin-top: 2px; }
.g-save .big .icon { margin: 5px 0; }
.paste { width: 48px; }
.paste span { margin-top: 0; }
.paste .icon:last-child { margin: 5px 0 0; }
.stack { display: flex; flex-direction: column; align-items: flex-start; margin-top: -1px; }
.small { height: 23px; justify-content: flex-start; }
.small .ic { width: 19px; display: flex; justify-content: center; }
.small.off { color: #a3a3a3; }
.g-edit .stack { padding-left: 6px; }
.g-edit .ic { width: 21px; padding-right: 2px; }
.far { margin-left: 9px; }
.near { margin-left: 4px; }
.rows { padding: 2px 0 0 4px; }
.row { display: flex; align-items: center; height: 31px; }
.tool { width: 22px; height: 24px; }
.tool span { width: 22px; display: flex; justify-content: center; flex: none; }
.tool.drop { width: 34px; justify-content: flex-start; }
.tool.drop > .icon { margin-left: 3px; }
.tool.on { background: #c5c5c5; }
.sep { height: 22px; flex: none; background: linear-gradient(#d4d4d4, #d4d4d4) center / 1px 100% no-repeat; }
.combo { display: grid; align-items: center; height: 23px; background: #fff; border: 1px solid #ababab; }
.combo select { grid-area: 1 / 1; appearance: none; border: 0; background: none; margin: 0; padding: 0 14px 0 2px; width: 100%; font: 13px/20px "Open Sans", "Noto Sans CJK SC", sans-serif; color: #444; overflow: hidden; text-overflow: clip; outline: 0; }
.combo .icon { grid-area: 1 / 1; justify-self: end; margin-right: 5px; }
.combo.name { width: 92px; }
.combo.size { width: 47px; margin-left: -1px; }
.combo.size select { font-size: 12px; }
.gallery { display: flex; height: 60px; margin: 2px 7px 0 5px; background: #fff; border: 1px solid #ababab; }
.style { width: 72px; flex-direction: column; justify-content: flex-start; align-items: center; color: #555; }
.pv { width: 60px; height: 36px; line-height: 38px; overflow: hidden; text-align: left; color: #000; font-family: "Liberation Serif", serif; font-size: 18px; }
.pv-light { font-size: 17px; color: #555; }
.pv-hei { font-family: "Liberation Sans", sans-serif; }
.pv-title { font-size: 32px; font-weight: 700; line-height: 34px; }
.pv-big { font-size: 27px; line-height: 36px; }
.nm { line-height: 16px; }
.nm small { font-size: 8px; }
.gal-nav { display: flex; flex-direction: column; width: 14px; margin-left: auto; border-left: 1px solid #c6c6c6; }
.gal-nav button { flex: 1; border-bottom: 1px solid #c6c6c6; }
.gal-nav button:last-child { border-bottom: 0; }
.gal-nav .dim { background: #e3e3e3; }
.collapse { margin: auto 9px 5px auto; }

.quick { display: flex; flex: none; height: 35px; }
.quick button { width: 53px; }
.quick .q-save { width: 48px; }
.quick .q-undo { padding-left: 12px; gap: 8px; }

.work { display: flex; flex: 1; min-height: 0; border-bottom: 1px solid #c0c0c0; }
.nav { width: 269px; flex: none; border-right: 1px solid #c0c0c0; padding: 14px 18px 0 13px; }
.nav-head { display: flex; height: 32px; gap: 8px; margin-right: -6px; }
.nav-head h2 { flex: 1; font-size: 21px; line-height: 26px; color: #2b579a; }
.nav-head button { height: 18px; }
.search { display: flex; width: 237px; height: 25px; margin-top: 1px; background: #fff; border: 1px solid #ababab; }
.search input { flex: 1; min-width: 0; border: 0; outline: 0; background: none; padding: 0 2px; font: inherit; color: #555; }
.search input::placeholder { color: #666; opacity: 1; }
.search .s-more { width: 14px; margin: 0 0 0 3px; }
.nav-tabs { display: flex; gap: 25px; margin-top: 17px; }
.nav-tabs .active { font-weight: 700; color: #2b579a; }
.to-top { width: 210px; height: 18px; margin: 13px 0 0 15px; background: #fdfdfd; border: 1px solid #c0c0c0; }
.tree { list-style: none; margin-top: -1px; font-size: 13px; }
.tree li { display: flex; align-items: center; height: 21px; }
.tree a { color: inherit; text-decoration: none; flex: 1; line-height: 20px; }
.arrow { width: 16px; display: flex; }
.lv1 { padding-left: 5px; }
.lv2 { padding-left: 21px; }
.lv3 { padding-left: 48px; }
.lv3 .arrow { display: none; }
.lv3 a { padding-left: 5px; }
.tree .active a { background: #c2d5f2; margin-right: 13px; }

.v-col { width: 27px; flex: none; display: flex; flex-direction: column; align-items: flex-start; }
.tab-stop { width: 26px; height: 27px; margin: 1px 0 2px 1px; background: #fff; border: 3px solid #dadada; }
.v-ruler { margin-left: 5px; flex: none; }
.v-ruler text, .h-ruler text { font: 10px "Liberation Sans", sans-serif; fill: #333; }
.mk { fill: #444; }
.canvas { flex: 1; min-width: 0; display: flex; flex-direction: column; align-items: center; }
.h-ruler { flex: none; position: relative; z-index: 1; overflow: visible; }
.handle path { fill: #fff; stroke: #8a8a8a; }
.viewport { flex: 1; min-height: 0; overflow: hidden; margin-top: 4px; }
.page { position: relative; width: 711px; background: #fff; border: 1px solid #c6c6c6; color: #000; font: 14px/23px "Liberation Serif", "Noto Sans CJK SC", serif; }
.page.first { border-top: 0; overflow: hidden; padding-bottom: 64px; }
.first .text { margin-top: -14px; height: 465px; }
.text { padding: 0 106px; }
.page.second { margin-top: 13px; padding-top: 49px; }
.line { display: block; width: 497px; white-space: nowrap; text-align: justify; text-align-last: justify; }
.line.in { padding-left: 29px; }
.l8 { width: 115px; }
.l12 { width: 172px; }
.line.l19 { width: 273px; }
.line.l33 { width: 475px; }
.line.l34 { width: 490px; }
.line.l8 { width: 115px; }
.line.l12 { width: 172px; }
.half { font-style: normal; font-feature-settings: "halt"; }
.boxed { font-weight: 400; outline: 1px solid #000; }
dl { padding: 1px 0 0 29px; }
dl div { display: flex; }
dt { width: 50px; }
dd { width: 58px; text-align: justify; text-align-last: justify; }
.edge { display: flex; justify-content: space-between; height: 21px; margin: 0 85px; font-size: 11px; line-height: 18px; color: #666; }
.edge i { width: 21px; border: 0 solid #a0a0a0; }
.foot i { border-top-width: 1px; }
.head i { border-bottom-width: 1px; }
.edge i:first-child { border-right-width: 1px; }
.edge i:last-child { border-left-width: 1px; }
.running { text-align: center; font-size: 11px; line-height: 16px; color: #777; }
.page h3 { text-align: center; font-size: 19px; font-weight: 700; line-height: 24px; margin-bottom: 28px; }
.beam { position: absolute; left: 278px; top: 309px; width: 1px; height: 16px; background: #000; }
.pointer { position: absolute; left: 467px; top: 34px; }

.scroll { width: 16px; flex: none; display: flex; flex-direction: column; padding: 2px 1px 2px 0; background: #dadada; }
.scroll button { height: 15px; background: #fff; border: 1px solid #ababab; }
.track { flex: 1; display: grid; grid-template-rows: 571fr 68px 154fr; }
.thumb { grid-row: 2; background: #fff; border: 1px solid #ababab; }

.status { display: flex; align-items: center; flex: none; height: 20px; gap: 19px; padding: 0 27px 0 6px; background: #f1f1f1; white-space: nowrap; }
.views { display: flex; margin-left: auto; align-self: stretch; }
.views button { width: 38px; }
.views .on { background: #c9c9c9; }
.zoom-box { display: flex; align-items: center; gap: 4px; margin: 0 -3px 0 -15px; }
.zoom-box button { width: 8px; height: 8px; background: linear-gradient(#555, #555) center / 8px 2px no-repeat; }
.zoom-box .plus { margin-left: 4px; background: linear-gradient(#555, #555) center / 8px 2px no-repeat, linear-gradient(#555, #555) center / 2px 8px no-repeat; }
.zoom { appearance: none; width: 96px; height: 12px; margin: 0; background: linear-gradient(#999, #999) center / 100% 1px no-repeat, linear-gradient(#999, #999) center / 1px 5px no-repeat; }
.zoom::-webkit-slider-thumb { appearance: none; width: 4px; height: 11px; background: #555; }

.brand { position: absolute; right: 0; bottom: 2px; width: 190px; height: 60px; pointer-events: none; }
.brand > * { position: absolute; }
.ime { display: flex; align-items: center; justify-content: center; gap: 4px; left: 112px; top: 14px; width: 61px; height: 25px; border-radius: 5px; background: #fff; box-shadow: 0 1px 3px #777; color: #777; }
.brand strong { left: 73px; top: 9px; font-size: 21px; line-height: 30px; font-weight: 700; color: #4d8fd6; opacity: 0.7; white-space: nowrap; }
.brand em { left: 74px; top: 35px; font: 17px/20px "Liberation Sans", sans-serif; color: #55b964; opacity: 0.9; }
</style>
